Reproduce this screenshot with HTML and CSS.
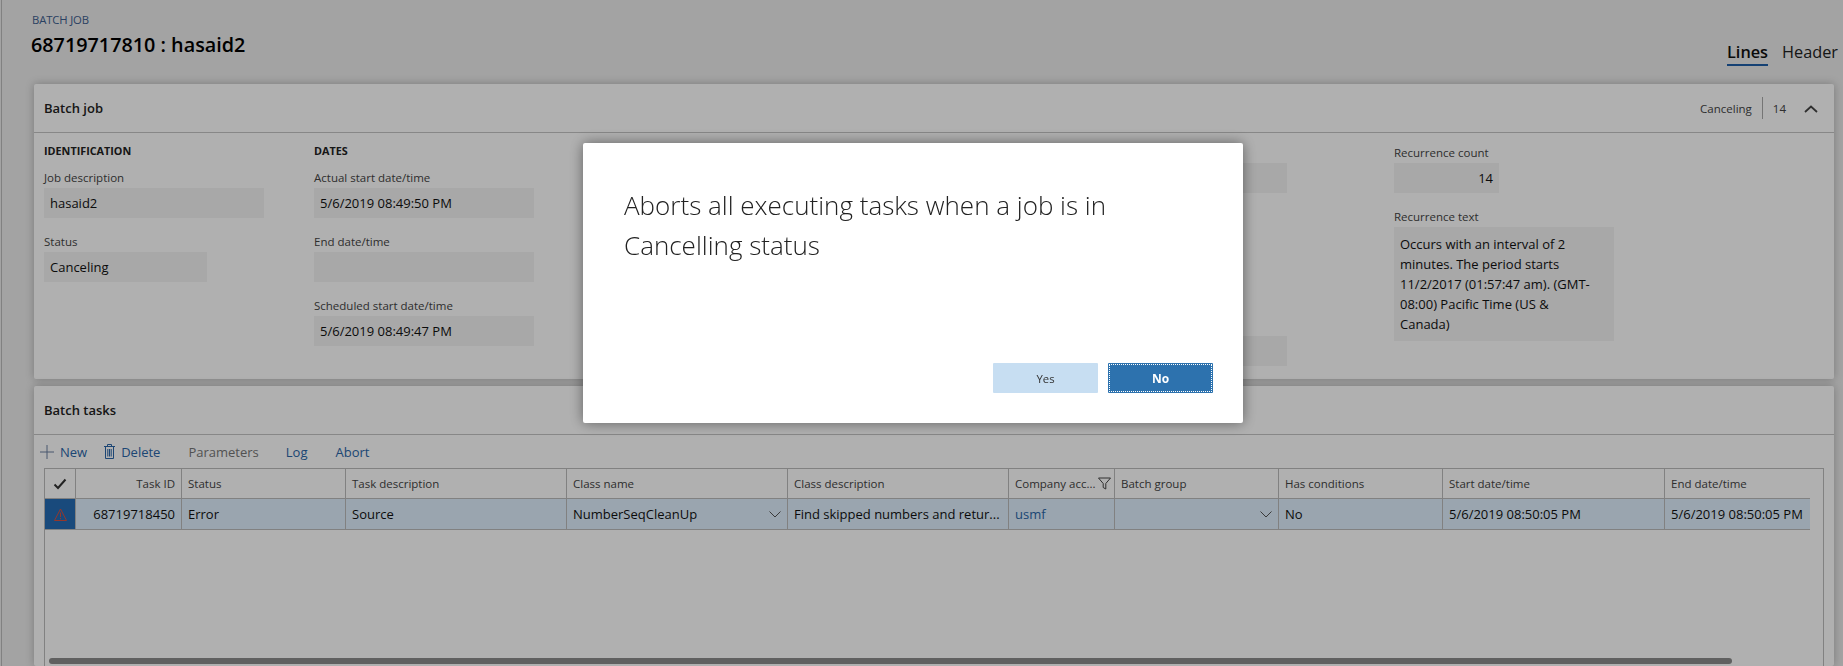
FILE: index.html
```html
<!DOCTYPE html>
<html>
  <head>
    <meta charset="UTF-8">
    <title>Batch job</title>
    <link rel="stylesheet" href="styles.css">
  </head>
  <body>
    <div class="page">
      <header class="page-head">
        <div>
          <div class="breadcrumb">BATCH JOB</div>
          <h1>68719717810 : hasaid2</h1>
        </div>
        <nav class="tabs">
          <span class="tab tab-active">Lines</span>
          <span class="tab">Header</span>
        </nav>
      </header>

      <section class="card card-job">
        <div class="card-head">
          <h2>Batch job</h2>
          <div class="summary">
            <span class="summary-item">Canceling</span>
            <span class="summary-sep"></span>
            <span class="summary-item">14</span>
            <svg class="collapse" width="14" height="8" viewBox="0 0 14 8"><path d="M1 7 L7 1.5 L13 7" fill="none" stroke="#444" stroke-width="1.8"/></svg>
          </div>
        </div>
        <div class="job-fields">
          <div class="col">
            <h3>IDENTIFICATION</h3>
            <div class="field">
              <label>Job description</label>
              <div class="value">hasaid2</div>
            </div>
            <div class="field">
              <label>Status</label>
              <div class="value value-short">Canceling</div>
            </div>
          </div>
          <div class="col">
            <h3>DATES</h3>
            <div class="field">
              <label>Actual start date/time</label>
              <div class="value">5/6/2019 08:49:50 PM</div>
            </div>
            <div class="field">
              <label>End date/time</label>
              <div class="value"></div>
            </div>
            <div class="field">
              <label>Scheduled start date/time</label>
              <div class="value">5/6/2019 08:49:47 PM</div>
            </div>
          </div>
          <div class="col"></div>
          <div class="col"></div>
          <div class="col col-plain">
            <div class="field">
              <label>&nbsp;</label>
              <div class="value value-short"></div>
            </div>
            <div class="field field-low">
              <label>&nbsp;</label>
              <div class="value value-short"></div>
            </div>
          </div>
          <div class="col col-plain">
            <div class="field">
              <label>Recurrence count</label>
              <div class="value value-count">14</div>
            </div>
            <div class="field">
              <label>Recurrence text</label>
              <div class="value value-text">Occurs with an interval of 2 minutes. The period starts 11/2/2017 (01:57:47 am). (GMT-08:00) Pacific Time (US &amp;<br>Canada)</div>
            </div>
          </div>
        </div>
      </section>

      <section class="card card-tasks">
        <div class="card-head">
          <h2>Batch tasks</h2>
        </div>
        <div class="toolbar">
          <span class="tool tool-new">
            <svg width="14" height="14" viewBox="0 0 14 14"><path d="M7 0 V14 M0 7 H14" stroke="#6A7FA0" stroke-width="1" fill="none"/></svg>
            New
          </span>
          <span class="tool tool-delete">
            <svg width="11" height="15" viewBox="0 0 11 15"><path d="M0 2.5 H11 M3.5 2.5 V0.5 H7.5 V2.5 M1.5 2.5 V14.5 H9.5 V2.5 M3.8 5 V12.5 M5.5 5 V12.5 M7.2 5 V12.5" stroke="#2a66a8" stroke-width="1" fill="none"/></svg>
            Delete
          </span>
          <span class="tool tool-params">Parameters</span>
          <span class="tool tool-log">Log</span>
          <span class="tool tool-abort">Abort</span>
        </div>
        <div class="grid-box">
          <table class="grid">
            <colgroup>
              <col class="w-mark"><col class="w-id"><col class="w-status"><col class="w-wide"><col class="w-wide"><col class="w-wide"><col class="w-id"><col class="w-status"><col class="w-status"><col class="w-start"><col class="w-end">
            </colgroup>
            <thead>
              <tr>
                <th class="mark">
                  <svg width="14" height="12" viewBox="0 0 14 12"><path d="M1.5 6.5 L5 10 L12.5 1.5" fill="none" stroke="#333" stroke-width="2"/></svg>
                </th>
                <th class="num">Task ID</th>
                <th>Status</th>
                <th>Task description</th>
                <th>Class name</th>
                <th>Class description</th>
                <th class="has-filter">
                  <div class="cell-flex">
                    <span>Company acc...</span>
                    <svg width="13" height="13" viewBox="0 0 13 13"><path d="M0.5 1 H12.5 L7.8 6.5 V12 L5.2 10.5 V6.5 Z" fill="none" stroke="#444" stroke-width="1"/></svg>
                  </div>
                </th>
                <th>Batch group</th>
                <th>Has conditions</th>
                <th>Start date/time</th>
                <th class="last">End date/time</th>
              </tr>
            </thead>
            <tbody>
              <tr class="row-selected">
                <td class="mark mark-on">
                  <svg width="13" height="13" viewBox="0 0 13 13"><path d="M6.5 1 L12.5 12.5 H0.5 Z M6.5 4.5 V9 M6.5 10 V11.2" fill="none" stroke="#D8503F" stroke-width="1"/></svg>
                </td>
                <td class="num">68719718450</td>
                <td>Error</td>
                <td>Source</td>
                <td>
                  <div class="cell-flex">
                    <span>NumberSeqCleanUp</span>
                    <svg class="drop" width="12" height="7" viewBox="0 0 12 7"><path d="M0.5 0.5 L6 6 L11.5 0.5" fill="none" stroke="#555" stroke-width="1"/></svg>
                  </div>
                </td>
                <td>Find skipped numbers and retur...</td>
                <td class="link">usmf</td>
                <td>
                  <div class="cell-flex cell-end">
                    <svg class="drop" width="12" height="7" viewBox="0 0 12 7"><path d="M0.5 0.5 L6 6 L11.5 0.5" fill="none" stroke="#555" stroke-width="1"/></svg>
                  </div>
                </td>
                <td>No</td>
                <td>5/6/2019 08:50:05 PM</td>
                <td class="last">5/6/2019 08:50:05 PM</td>
              </tr>
            </tbody>
          </table>
          <div class="scrollbar"></div>
        </div>
      </section>
    </div>

    <div class="overlay"></div>

    <div class="dialog">
      <p class="dialog-text">Aborts all executing tasks when a job is in Cancelling status</p>
      <div class="dialog-buttons">
        <button class="btn btn-yes">Yes</button>
        <button class="btn btn-no">No</button>
      </div>
    </div>
  </body>
</html>
```

FILE: styles.css
```css
html, body {
  height: 100%;
  margin: 0;
  overflow: hidden;
}

body {
  font-family: "Open Sans", "Noto Sans", sans-serif;
  font-size: 13px;
  color: #111111;
  background-color: #ECECEC;
}

.page {
  height: 100%;
  margin-left: 1px;
  border-left: 1px solid #BBBBBB;
  display: flex;
  flex-direction: column;
}

.page-head {
  display: flex;
  justify-content: space-between;
  height: 84px;
  padding: 13px 5px 0 29px;
  box-sizing: border-box;
  flex-shrink: 0;
}

.breadcrumb {
  font-size: 11.3px;
  line-height: 14px;
  padding-left: 1px;
  color: #3E5F8F;
  letter-spacing: -0.15px;
}

h1 {
  font-size: 19.8px;
  line-height: 28px;
  margin: 4px 0 0;
  font-weight: 600;
  color: #000000;
}

.tabs {
  display: flex;
  gap: 14px;
  margin-top: 27px;
}

.tab {
  font-size: 16.3px;
  line-height: 24px;
  height: 24px;
  color: #222222;
}

.tab-active {
  font-weight: 600;
  color: #111111;
  border-bottom: 2px solid #1F5FA8;
}

.card {
  background-color: #FFFFFF;
  margin: 0 9px 7px 32px;
  box-shadow: 0 0 8px rgba(0, 0, 0, 0.25);
  border-radius: 2px;
  flex-shrink: 0;
}

.card-job {
  height: 295px;
}

.card-head {
  display: flex;
  justify-content: space-between;
  align-items: center;
  height: 48px;
  padding: 0 16px 0 10px;
  border-bottom: 1px solid #C4C4C4;
}

h2 {
  margin: 0 0 1px;
  font-size: 13px;
  font-weight: 600;
  color: #222222;
}

.summary {
  display: flex;
  align-items: center;
  font-size: 11.5px;
  color: #444444;
}

.summary-sep {
  width: 1px;
  height: 22px;
  margin: 0 10px;
  background-color: #AAAAAA;
}

.collapse {
  margin-left: 18px;
  margin-top: 2px;
}

.job-fields {
  display: grid;
  grid-template-columns: repeat(6, 270px);
  padding: 10px 0 0 10px;
}

.col-plain {
  padding-top: 2px;
}

h3 {
  margin: 0 0 11px;
  font-size: 10.8px;
  line-height: 16px;
  font-weight: 700;
  color: #222222;
}

.field {
  margin-bottom: 16px;
}

.field-low {
  margin-top: 125px;
}

label {
  display: block;
  font-size: 11.5px;
  line-height: 16px;
  margin-bottom: 2px;
  color: #444444;
}

.value {
  width: 220px;
  height: 30px;
  line-height: 31px;
  padding: 0 6px;
  box-sizing: border-box;
  background-color: #F3F3F3;
  color: #111111;
}

.value-short {
  width: 163px;
}

.value-count {
  width: 105px;
  text-align: right;
}

.value-text {
  height: 114px;
  line-height: 20px;
  padding: 7px 6px;
}

.card-tasks {
  flex: 1;
  margin-bottom: 0;
  overflow: hidden;
}

.toolbar {
  display: flex;
  align-items: center;
  height: 33px;
  padding-left: 6px;
  color: #2A66A8;
}

.tool {
  display: flex;
  align-items: center;
  gap: 6px;
}

.tool-delete {
  margin-left: 17px;
}

.tool-params {
  margin-left: 28px;
  color: #777777;
}

.tool-log {
  margin-left: 27px;
}

.tool-abort {
  margin-left: 28px;
}

.grid-box {
  position: relative;
  margin: 0 10px;
  height: 300px;
  border: 1px solid #BBBBBB;
  box-sizing: border-box;
}

.grid {
  border-collapse: separate;
  border-spacing: 0;
  table-layout: fixed;
  width: 1765px;
}

.w-mark { width: 31px; }
.w-id { width: 106px; }
.w-status { width: 164px; }
.w-wide { width: 221px; }
.w-start { width: 222px; }
.w-end { width: 145px; }

.grid th,
.grid td {
  height: 30px;
  padding: 0 6px;
  box-sizing: border-box;
  white-space: nowrap;
  overflow: hidden;
  text-align: left;
  border-right: 1px solid #BBBBBB;
  border-bottom: 1px solid #BBBBBB;
}

.grid th {
  font-size: 11.5px;
  font-weight: 400;
  color: #444444;
}

.grid .has-filter {
  padding-right: 3px;
}

.grid td {
  height: 31px;
  background-color: #DFF0FE;
}

.grid .last {
  border-right: none;
}

.grid .num {
  text-align: right;
}

.grid .mark {
  padding: 0;
  text-align: center;
}

.grid .mark svg {
  display: block;
  margin: 0 auto;
}

.grid .mark-on {
  background-color: #256CB4;
}

.grid .link {
  color: #2A66A8;
}

.cell-flex {
  display: flex;
  align-items: center;
  justify-content: space-between;
}

.cell-end {
  justify-content: flex-end;
}

.scrollbar {
  position: absolute;
  left: 4px;
  top: 189px;
  width: 1683px;
  height: 6px;
  border-radius: 3px;
  background-color: #8B8B8B;
}

.overlay {
  position: fixed;
  inset: 0;
  background-color: rgba(0, 0, 0, 0.31);
}

.dialog {
  position: fixed;
  left: 583px;
  top: 143px;
  width: 660px;
  height: 280px;
  padding: 42px 30px 30px 41px;
  box-sizing: border-box;
  display: flex;
  flex-direction: column;
  justify-content: space-between;
  background-color: #FFFFFF;
  border-radius: 2px;
  box-shadow: 0 0 14px rgba(0, 0, 0, 0.45);
}

.dialog-text {
  margin: 0;
  width: 540px;
  font-size: 26px;
  line-height: 40px;
  font-weight: 300;
  color: #222222;
}

.dialog-buttons {
  display: flex;
  justify-content: flex-end;
  gap: 10px;
}

.btn {
  width: 105px;
  height: 30px;
  border: none;
  border-radius: 1px;
  font-family: inherit;
  font-size: 12px;
  padding: 1px 0 0;
}

.btn-yes {
  background-color: #C7DEF2;
  color: #333333;
  font-size: 11.3px;
}

.btn-no {
  background-color: #2D72AE;
  color: #FFFFFF;
  font-weight: 700;
  outline: 1px dotted #FFFFFF;
  outline-offset: -2px;
}
```
